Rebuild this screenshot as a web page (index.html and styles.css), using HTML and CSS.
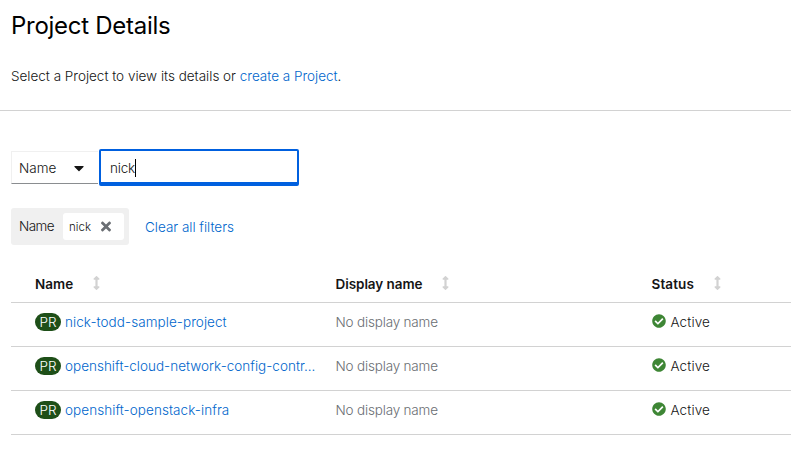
FILE: index.html
```html
<!DOCTYPE html>
<html lang="en">
<head>
<meta charset="utf-8">
<title>Project Details</title>
<link rel="stylesheet" href="styles.css">
</head>
<body>
<svg class="defs" aria-hidden="true">
  <symbol id="sort" viewBox="0 0 256 512"><path d="M214.059 377.941H168V134.059h46.059c21.382 0 32.09-25.851 16.971-40.971L144.971 7.029c-9.373-9.373-24.568-9.373-33.941 0L24.971 93.088c-15.119 15.119-4.411 40.971 16.971 40.971H88v243.882H41.941c-21.382 0-32.09 25.851-16.971 40.971l86.059 86.059c9.373 9.373 24.568 9.373 33.941 0l86.059-86.059c15.12-15.119 4.412-40.971-16.971-40.971z"/></symbol>
  <symbol id="check" viewBox="0 0 512 512"><path d="M504 256c0 136.967-111.033 248-248 248S8 392.967 8 256 119.033 8 256 8s248 111.033 248 248zM227.314 387.314l184-184c6.248-6.248 6.248-16.379 0-22.627l-22.627-22.627c-6.248-6.249-16.379-6.249-22.628 0L216 308.118l-70.059-70.059c-6.248-6.248-16.379-6.248-22.628 0l-22.627 22.627c-6.248 6.248-6.248 16.379 0 22.627l104 104c6.249 6.249 16.379 6.249 22.628.001z"/></symbol>
</svg>
<header class="page-head">
  <h1>Project Details</h1>
  <p>Select a Project to view its details or <a>create a Project</a>.</p>
</header>
<main>
  <div class="toolbar">
    <button class="select"><span>Name</span><svg class="caret" viewBox="0 0 320 512"><path d="M31.3 192h257.3c17.8 0 26.7 21.5 14.1 34.1L174.1 354.8c-7.8 7.8-20.5 7.8-28.3 0L17.2 226.1C4.6 213.5 13.4 192 31.3 192z"/></svg></button>
    <div class="search"><span>nick</span><i class="cursor"></i></div>
  </div>
  <div class="filters">
    <div class="group"><span class="group-label">Name</span><div class="chip"><span>nick</span><svg class="times" viewBox="0 0 352 512"><path d="M242.72 256l100.07-100.07c12.28-12.28 12.28-32.19 0-44.48l-22.24-22.24c-12.28-12.28-32.19-12.28-44.48 0L176 189.28 75.93 89.21c-12.28-12.28-32.19-12.28-44.48 0L9.21 111.45c-12.28 12.28-12.28 32.19 0 44.48L109.28 256 9.21 356.07c-12.28 12.28-12.28 32.19 0 44.48l22.24 22.24c12.28 12.28 32.2 12.28 44.48 0L176 322.72l100.07 100.07c12.28 12.28 32.2 12.28 44.48 0l22.24-22.24c12.28-12.28 12.28-32.19 0-44.48L242.72 256z"/></svg></div></div>
    <a class="clear">Clear all filters</a>
  </div>
  <div class="table">
    <div class="row head">
      <div class="cell"><span>Name</span><svg class="sort"><use href="#sort"/></svg></div>
      <div class="cell"><span class="h-display">Display name</span><svg class="sort"><use href="#sort"/></svg></div>
      <div class="cell"><span class="h-status">Status</span><svg class="sort"><use href="#sort"/></svg></div>
    </div>
    <div class="row">
      <div class="cell"><span class="badge">PR</span><a class="name">nick-todd-sample-project</a></div>
      <div class="cell muted">No display name</div>
      <div class="cell"><svg class="check"><use href="#check"/></svg><span class="active">Active</span></div>
    </div>
    <div class="row">
      <div class="cell"><span class="badge">PR</span><a class="name long">openshift-cloud-network-config-contr...</a></div>
      <div class="cell muted">No display name</div>
      <div class="cell"><svg class="check"><use href="#check"/></svg><span class="active">Active</span></div>
    </div>
    <div class="row">
      <div class="cell"><span class="badge">PR</span><a class="name">openshift-openstack-infra</a></div>
      <div class="cell muted">No display name</div>
      <div class="cell"><svg class="check"><use href="#check"/></svg><span class="active">Active</span></div>
    </div>
  </div>
</main>
</body>
</html>
```
FILE: styles.css
```css
* { box-sizing: border-box; }
body { margin: 0; background: #fff; color: #151515; font: 360 13.5px/21px Inter, "Liberation Sans", sans-serif; overflow: hidden; }
svg { display: block; flex: none; fill: currentColor; }
.defs { position: absolute; width: 0; height: 0; }
a { color: #06c; white-space: nowrap; }
.page-head { height: 111px; padding: 10px 11px 0; border-bottom: 1px solid #d2d2d2; }
h1 { margin: 0; font-size: 24px; line-height: 31px; font-weight: 400; letter-spacing: -.27px; color: #000; }
p { margin: 25px 0 0; white-space: nowrap; letter-spacing: -.01px; }
main { padding: 38px 0 0 11px; }
.toolbar { display: flex; height: 37px; }
.select { display: flex; align-items: center; justify-content: space-between; width: 87px; height: 33px; margin-top: 2px; padding: 1px 14px 0 7px; border: 1px solid #f0f0f0; border-right: 0; border-bottom-color: #8a8d90; background: #fff; font: inherit; color: inherit; }
.caret { width: 10px; height: 16px; }
.search { display: flex; align-items: center; width: 200px; height: 37px; margin-left: 1px; padding: 3px 0 0 9px; border: 2px solid #0060df; border-bottom-width: 4px; border-radius: 2px; letter-spacing: -.2px; }
.cursor { width: 1px; height: 18px; background: #000; }
.filters { display: flex; align-items: center; height: 37px; margin-top: 22px; }
.group { display: flex; align-items: center; width: 118px; height: 37px; padding: 0 5px 0 8px; justify-content: space-between; border-radius: 3px; background: #f0f0f0; }
.group-label { letter-spacing: -.6px; }
.chip { display: flex; align-items: center; justify-content: space-between; width: 61px; height: 27px; padding: 0 13px 0 6px; border-radius: 3px; background: #fff; font-size: 11.5px; line-height: 19px; }
.chip span { padding-top: 2px; }
.times { width: 10px; height: 15px; color: #6a6e73; }
.clear { margin-left: 16px; padding-top: 2px; letter-spacing: -.02px; }
.table { margin-top: 20px; }
.row { display: grid; grid-template-columns: 300.5px 316px 1fr; height: 44px; padding-left: 24px; border-bottom: 1px solid #d2d2d2; }
.cell { display: flex; align-items: flex-start; padding-top: 9px; white-space: nowrap; }
.head { height: 38px; font-weight: 600; }
.head .cell { padding-top: 9px; }
.h-display { letter-spacing: -.06px; }
.h-status { letter-spacing: .1px; }
.sort { width: 7px; height: 14px; margin: 2px 0 0 20px; color: #d2d2d2; }
.badge { width: 26px; height: 18px; margin: 1px 4px 0 0; border-radius: 9px; background: #1e4f18; color: #fff; line-height: 18px; text-align: center; }
.name { letter-spacing: .06px; }
.long { letter-spacing: .01px; }
.muted { color: #6a6e73; letter-spacing: -.18px; }
.check { width: 14px; height: 14px; margin: 2px 5px 0 0; color: #3e8635; }
.active { letter-spacing: .1px; }
```
